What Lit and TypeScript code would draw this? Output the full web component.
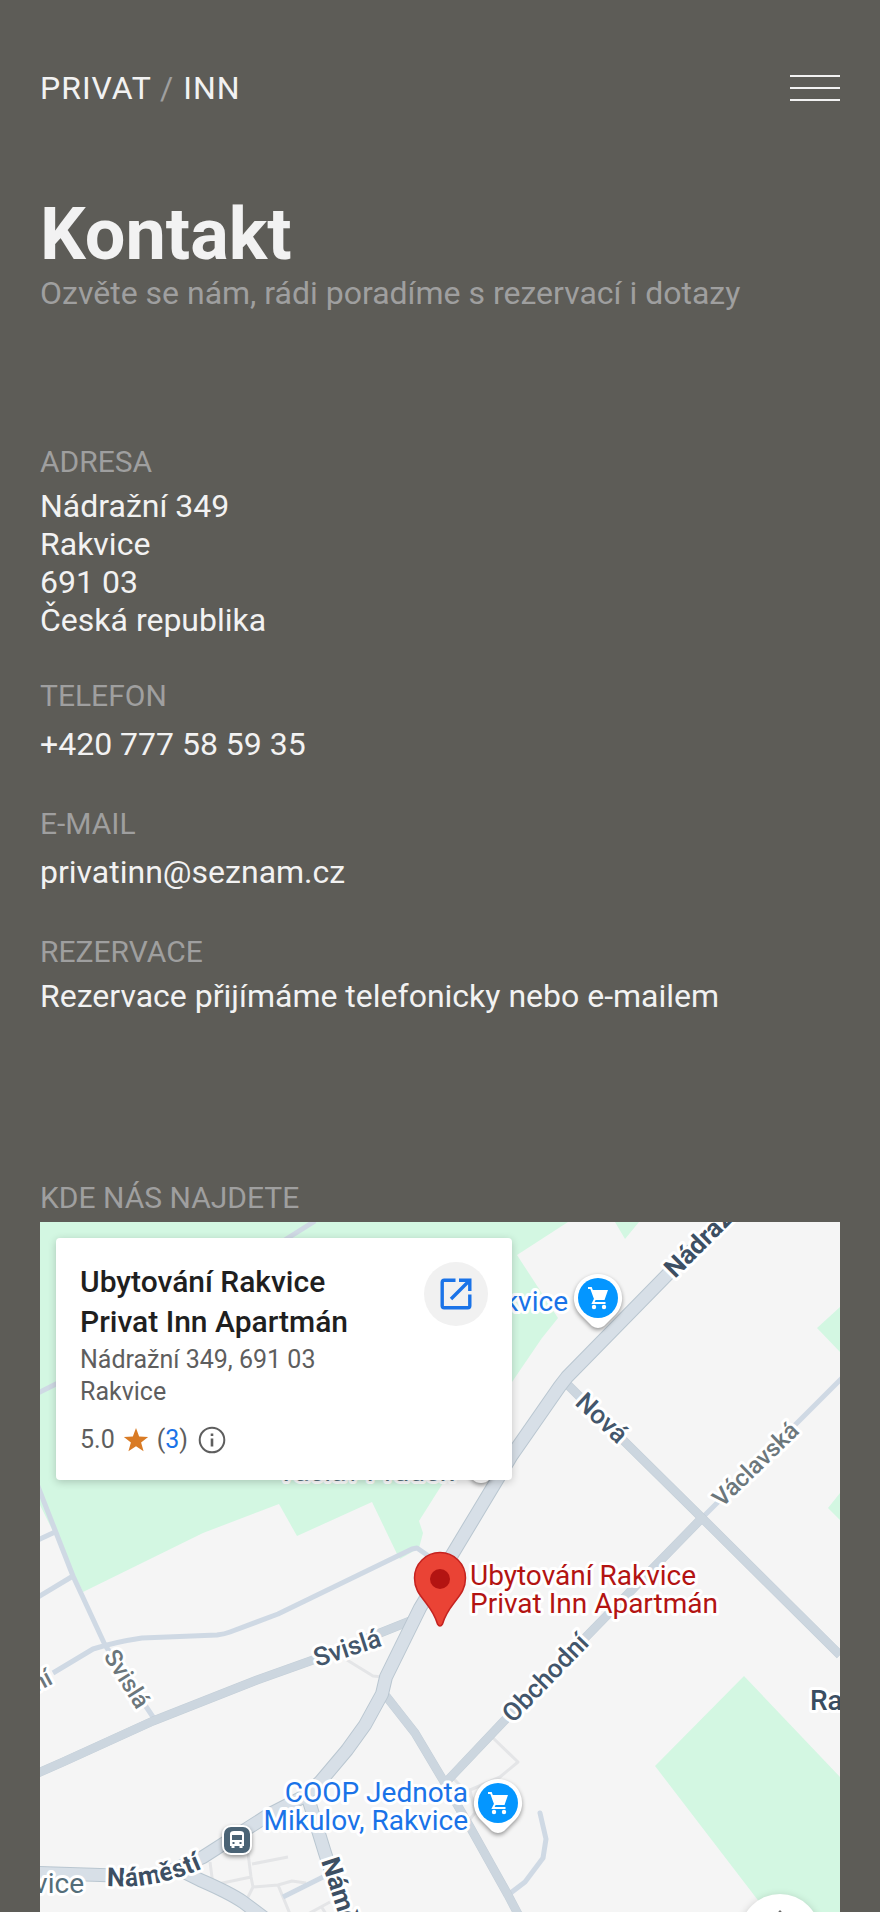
import { LitElement, html, svg, css } from "lit";
import { customElement } from "lit/decorators.js";

@customElement("location-map")
class LocationMap extends LitElement {
  static styles = css`
    :host {
      display: flex;
      position: relative;
      overflow: hidden;
      min-height: 680px;
      background: #f5f5f5;
      font-family: Roboto, "Noto Sans", sans-serif;
    }
    .canvas {
      position: absolute;
      inset: 0;
      width: 100%;
      height: 100%;
    }
    .park { fill: #d3f7e2; }
    .road { fill: none; stroke-linejoin: round; }
    .path { stroke: #e4e5e7; stroke-width: 3; }
    .minor { stroke: #cfd9e4; stroke-width: 5; }
    .medium-edge { stroke: #c4cfd8; stroke-width: 9; }
    .medium { stroke: #ccd6df; stroke-width: 8; }
    .major-edge { stroke: #b9c6d0; stroke-width: 14; }
    .major { stroke: #d7dfe7; stroke-width: 12; }
    .label {
      font-size: 28px;
      paint-order: stroke;
      stroke: #fff;
      stroke-width: 6px;
      stroke-linejoin: round;
    }
    .street { font-size: 26px; font-weight: 500; fill: #43566b; }
    .strong { font-size: 26px; font-weight: 700; fill: #3d4f63; }
    .quiet { font-size: 24px; fill: #6c777c; font-weight: 500; }
    .shop { fill: #1a73e8; }
    .place { fill: #b31412; }
    .town { fill: #3a4d61; font-weight: 500; }
    .stop { fill: #546e7a; }
    .end { text-anchor: end; }
    .lift { filter: drop-shadow(0 2px 2px rgba(0, 0, 0, 0.4)); }
    .card {
      position: absolute;
      top: 16px;
      left: 16px;
      width: 456px;
      box-sizing: border-box;
      padding: 24px;
      display: flex;
      justify-content: space-between;
      align-items: flex-start;
      background: #fff;
      border-radius: 4px;
      box-shadow: 0 2px 8px rgba(0, 0, 0, 0.2);
      color: #5e5e5e;
      font-size: 25px;
      line-height: 32px;
    }
    .name {
      margin: 0 0 2px;
      color: #1f1f1f;
      font-size: 30px;
      line-height: 40px;
      font-weight: 500;
    }
    .where { margin: 0; font-style: normal; }
    .rating {
      display: flex;
      align-items: center;
      gap: 8px;
      margin-top: 16px;
      height: 32px;
    }
    .rating a { color: #1a73e8; text-decoration: none; }
    .star { width: 26px; height: 26px; fill: #d97b25; }
    .info {
      border: 0;
      padding: 0;
      background: none;
      width: 32px;
      height: 32px;
    }
    .open {
      flex: none;
      width: 64px;
      height: 64px;
      border-radius: 50%;
      background: #f1f1f1;
      display: grid;
      place-items: center;
    }
    .round {
      position: absolute;
      right: 20px;
      bottom: -62px;
      width: 80px;
      height: 80px;
      border: 0;
      border-radius: 50%;
      background: #fff;
      box-shadow: 0 2px 8px rgba(0, 0, 0, 0.2);
      padding: 0;
    }
  `;

  private cart(x: number, y: number) {
    return svg`<g transform="translate(${x} ${y})">
      <path class="lift" fill="#fff" d="M0-24A24 24 0 0 1 18 16L6 28Q0 32-6 28L-18 16A24 24 0 0 1 0-24Z"/>
      <circle r="20" fill="#0496ff"/>
      <path fill="none" stroke="#fff" stroke-width="2" d="M-10-10H-7L-3 1L-5 5H7.500"/>
      <path fill="#fff" d="M-6.500-8H10L6.500 2H-3Z"/>
      <circle cx="-4" cy="9" r="2.200" fill="#fff"/><circle cx="6" cy="9" r="2.200" fill="#fff"/>
    </g>`;
  }

  render() {
    const medium =
      "M568 1385L623 1440L702 1518L840 1655M702 1518L503 1722L448 1780M386 1696L415 1733L443 1780L470 1827L508 1895L518 1914M410 1621L380 1633L313 1660L257 1680L153 1721L63 1762L38 1773";
    const major =
      "M763 1180L667 1275L567 1377L560 1386L512 1455L485 1500L420 1608L386 1677L382 1694L365 1725L347 1750L320 1782L303 1797L270 1814L203 1857L180 1867L163 1874Q150 1877 130 1876L38 1873M180 1870L200 1880Q230 1893 243 1902L275 1926M308 1798L325 1853L350 1930";
    return html`
      <svg class="canvas" viewBox="40 1222 800 690" preserveAspectRatio="xMinYMin slice" role="img" aria-label="Mapa Rakvice">
        <path class="park" d="M40 1222H568L517 1255L558 1318L542 1338L512 1382L443 1483L419 1521L423 1533L419 1548L400 1559L397 1554L372 1502L297 1536L279 1504L203 1533L83 1592L40 1505Z"/>
        <path class="park" d="M615 1222L625 1239L639 1222ZM840 1307L817 1328L840 1352ZM840 1493L828 1508L840 1520ZM744 1676L655 1766L757 1899L767 1912H840V1777Z"/>
        <path class="road path" d="M347 1660L373 1676L382 1677M492 1737L518 1762L500 1777L470 1790L475 1812M453 1778L480 1806L468 1822M248 1853L251 1877L253 1887L245 1903M252 1864L288 1857M210 1862L213 1885L251 1877M253 1887L278 1885L292 1881L306 1883M278 1885L290 1914M308 1914L330 1902M321 1906L326 1914"/>
        <path class="road minor" d="M37 1484L73 1576L105 1645L155 1720M38 1540L55 1532M38 1597L73 1576M53 1673L93 1649Q115 1642 142 1638L217 1635Q225 1634 230 1632L278 1614L412 1549L417 1548L430 1557M315 1221L280 1243M38 1393L60 1382M702 1518L842 1378M283 1897L323 1877M446 1556L458 1540"/>
        <path class="road minor" stroke-linecap="round" d="M540 1813L546 1839L543 1858L525 1882L508 1895"/>
        <path class="road medium-edge" d=${medium}/>
        <path class="road medium" d=${medium}/>
        <path class="road major-edge" d=${major}/>
        <path class="road major" d=${major}/>

        <text class="label strong" transform="translate(675 1279) rotate(-45)">Nádražní</text>
        <text class="label street" transform="translate(574 1404) rotate(43)">Nová</text>
        <text class="label quiet" transform="translate(722 1508) rotate(-44)">Václavská</text>
        <text class="label street" transform="translate(513 1724) rotate(-46)">Obchodní</text>
        <text class="label street" transform="translate(317 1667) rotate(-18)">Svislá</text>
        <text class="label quiet" transform="translate(103 1656) rotate(58)">Svislá</text>
        <text class="label quiet end" transform="translate(54 1683) rotate(-28)">ní</text>
        <path id="square" fill="none" d="M107 1886C135 1887 165 1888 220 1860"/>
        <text class="label strong"><textPath href="#square">Náměstí</textPath></text>
        <text class="label strong" transform="translate(321 1861) rotate(72)">Náměstí</text>
        <text class="label town" x="810" y="1710">Rakvice</text>
        <text class="label stop end" x="84" y="1893">Rakvice</text>
        <text class="label stop end" x="454" y="1481">Václav Průdek</text>
        <circle class="lift" cx="481" cy="1471" r="12" fill="#fff"/>

        <text class="label shop end" x="568" y="1311">Rakvice</text>
        ${this.cart(598, 1298)}
        <text class="label shop end"><tspan x="468" y="1802">COOP Jednota</tspan><tspan x="468" y="1830">Mikulov, Rakvice</tspan></text>
        ${this.cart(498, 1803)}

        <g transform="translate(237 1840)">
          <rect class="lift" x="-15" y="-15" width="30" height="30" rx="9" fill="#fff"/>
          <rect x="-13" y="-13" width="26" height="26" rx="7" fill="#4a6375"/>
          <path fill="#fff" fill-rule="evenodd" d="M-7-6Q-7-9-3-9H3Q7-9 7-6V6H5.500V8H2.500V6H-2.500V8H-5.500V6H-7ZM-5-5V0H5V-5ZM-4.500 2V4H-2.500V2ZM2.500 2V4H4.500V2Z"/>
        </g>

        <path fill="#ea4335" stroke="#c5221f" stroke-width="1.500" d="M440 1552.500A25.500 25.500 0 0 1 465.500 1578C465.500 1590 459 1596 454 1603C447 1612 444.500 1617 442.500 1624Q440 1628 437.500 1624C435.500 1617 433 1612 426 1603C421 1596 414.500 1590 414.500 1578A25.500 25.500 0 0 1 440 1552.500Z"/>
        <circle cx="440" cy="1579" r="10" fill="#b31412"/>
        <text class="label place"><tspan x="470" y="1585">Ubytování Rakvice</tspan><tspan x="470" y="1613">Privat Inn Apartmán</tspan></text>
      </svg>

      <section class="card">
        <div>
          <h3 class="name">Ubytování Rakvice<br />Privat Inn Apartmán</h3>
          <address class="where">Nádražní 349, 691 03<br />Rakvice</address>
          <div class="rating">
            <span>5.0</span>
            <svg class="star" viewBox="0 0 24 24" aria-hidden="true"><path d="M12 1L14.900 8.800L23.200 9.200L16.700 14.300L19 22.400L12 17.700L5 22.400L7.300 14.300L.8 9.200L9.100 8.800Z"/></svg>
            <span>(<a href="#recenze">3</a>)</span>
            <button class="info" aria-label="Informace">
              <svg width="32" height="32" viewBox="0 0 32 32" fill="none" stroke="#5e5e5e" stroke-width="2"><circle cx="16" cy="16" r="12.300"/><path stroke-width="2.600" d="M16 14.500V22.500M16 9.500V12"/></svg>
            </button>
          </div>
        </div>
        <a class="open" href="#mapa" aria-label="Otevřít v Mapách">
          <svg width="32" height="32" viewBox="0 0 32 32" fill="none" stroke="#1a73e8" stroke-width="3.400"><path d="M15.500 2.200H4.200Q2.200 2.200 2.200 4.200V27.800Q2.200 29.800 4.200 29.800H27.800Q29.800 29.800 29.800 27.800V16.500M19 2.200H29.800V13M29.500 2.500L11 21"/></svg>
        </a>
      </section>
      <button class="round" aria-label="Ovládání kamery">
        <svg width="80" height="80" viewBox="0 0 80 80"><path fill="#666" d="M40 16L50 27L47 30L40 22L33 30L30 27Z"/></svg>
      </button>
    `;
  }
}

@customElement("app-root")
class AppRoot extends LitElement {
  static styles = css`
    :host {
      display: flex;
      flex-direction: column;
      box-sizing: border-box;
      min-height: 100vh;
      padding: 69px 40px 0;
      background: #5d5c57;
      color: #f2f2f2;
      font-family: Roboto, "Noto Sans", sans-serif;
      font-size: 32px;
      line-height: 38px;
    }
    a { color: inherit; text-decoration: none; }
    .top {
      display: flex;
      justify-content: space-between;
      align-items: center;
    }
    .logo { letter-spacing: 1px; }
    .slash, .muted { color: #9f9f9f; }
    .menu {
      display: flex;
      flex-direction: column;
      gap: 10px;
      width: 50px;
      padding: 0;
      border: 0;
      background: none;
    }
    .bar { height: 2px; background: #f2f2f2; }
    h1 {
      margin: 92px 0 3px;
      font-size: 72px;
      line-height: 72px;
      font-weight: 700;
    }
    p, h2, address, dl, dd { margin: 0; font: inherit; }
    .details {
      display: flex;
      flex-direction: column;
      gap: 38px;
      margin: 131px 0 164px;
    }
    dt, .heading { font-size: 30px; }
    dt { margin-bottom: 6px; }
    .contact { display: block; padding: 4px 0; }
    location-map { flex: 1; margin-top: 5px; }
  `;

  render() {
    return html`
      <header class="top">
        <a class="logo" href="#">PRIVAT <span class="slash">/</span> INN</a>
        <button class="menu" aria-label="Menu">
          <span class="bar"></span><span class="bar"></span><span class="bar"></span>
        </button>
      </header>
      <h1>Kontakt</h1>
      <p class="muted">Ozvěte se nám, rádi poradíme s rezervací i dotazy</p>
      <dl class="details">
        <div>
          <dt class="muted">ADRESA</dt>
          <dd><address>Nádražní 349<br />Rakvice<br />691 03<br />Česká republika</address></dd>
        </div>
        <div>
          <dt class="muted">TELEFON</dt>
          <dd><a class="contact" href="tel:+420777585935">+420 777 58 59 35</a></dd>
        </div>
        <div>
          <dt class="muted">E-MAIL</dt>
          <dd><a class="contact" href="mailto:privatinn@seznam.cz">privatinn@seznam.cz</a></dd>
        </div>
        <div>
          <dt class="muted">REZERVACE</dt>
          <dd>Rezervace přijímáme telefonicky nebo e-mailem</dd>
        </div>
      </dl>
      <h2 class="muted heading">KDE NÁS NAJDETE</h2>
      <location-map></location-map>
    `;
  }
}
